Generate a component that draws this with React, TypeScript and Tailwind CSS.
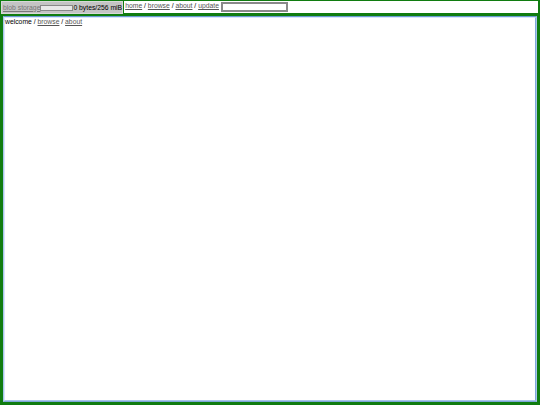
export default function App() {
  return (
    <div
      className="flex h-[405px] w-[540px] flex-col bg-[#107c10] text-[6.8px] leading-[8px] text-black"
      style={{ fontFamily: '"Liberation Sans", Arial, sans-serif' }}
    >
      <div className="flex h-[14px] shrink-0 items-stretch pt-[1px]">
        <div className="ml-[1px] flex items-center border border-[#d8d8d8] bg-[#c4c4c4] pl-[1px]">
          <a href="#" className="text-[#777] underline">blob storage</a>
          <div className="h-[6px] w-[33px] border border-[#888] bg-[#e8e8e8]" />
          <span>0 bytes/256 miB</span>
        </div>
        <div className="mb-[1px] mr-[2px] ml-[1px] flex flex-1 items-start bg-white pl-[1px] pt-[1px]">
          <div>
            <a href="#" className="text-[#555] underline">home</a> /{" "}
            <a href="#" className="text-[#555] underline">browse</a> /{" "}
            <a href="#" className="text-[#555] underline">about</a> /{" "}
            <a href="#" className="text-[#555] underline">update</a>
          </div>
          <input
            type="text"
            className="ml-[2px] h-[10px] w-[67px] border-2 border-[#8a8a8a] bg-white outline-none"
          />
        </div>
      </div>
      <div className="mb-[3px] ml-[3px] mr-[3px] mt-[2px] flex-1 border border-t-[#6b9bd2] border-l-[#a9c6ea] border-r-[#a9c6ea] border-b-[#7fa8d8] bg-white">
        <div className="h-full border border-r-[#7fa8d8] border-b-[#a9c6ea] border-t-[#d8e6f8] border-l-[#d8e6f8]">
          welcome /{" "}
          <a href="#" className="text-[#555] underline">browse</a> /{" "}
          <a href="#" className="text-[#555] underline">about</a>
        </div>
      </div>
    </div>
  );
}
